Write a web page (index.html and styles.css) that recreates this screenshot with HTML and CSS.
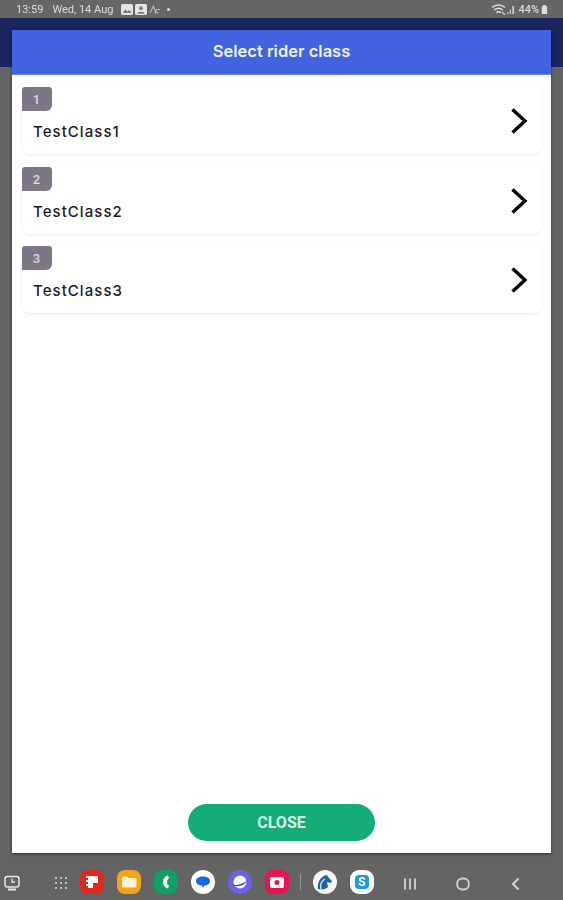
FILE: index.html
```html
<!DOCTYPE html>
<html lang="en">
<head>
    <meta charset="UTF-8">
    <meta name="viewport" content="width=device-width, initial-scale=1.0">
    <title>Select rider class</title>
    <link rel="stylesheet" href="styles.css">
</head>
<body>
    <div class="status-bar">
        <div class="status-left">
            <span class="status-time">13:59</span>
            <span>Wed, 14 Aug</span>
            <svg class="status-icon" viewBox="0 0 11 10"><rect width="11" height="10" rx="1.5" fill="#e4e4e4"/><path d="M1.5 8 4 5l2 2 1.500-1.500L9.500 8z" fill="#666"/></svg>
            <svg class="status-icon" viewBox="0 0 11 10"><rect width="11" height="10" rx="1.500" fill="#e4e4e4"/><circle cx="5.500" cy="3.800" r="1.700" fill="#777"/><path d="M2 9c.5-2.500 6.500-2.500 7 0z" fill="#777"/></svg>
            <svg class="status-icon" viewBox="0 0 11 10"><path d="M1 8l3-6 2 5 1-2h3M5 8h4" fill="none" stroke="#bbb" stroke-width="1"/></svg>
            <span class="status-dot"></span>
        </div>
        <div class="status-right">
            <svg class="status-wifi" viewBox="0 0 14 10"><path d="M1 3c3.500-3 8.500-3 12 0M3 5.500c2.500-2 5.500-2 8 0M5 8c1.200-1 2.800-1 4 0" fill="none" stroke="#ddd" stroke-width="1.400"/><path d="M10 7l3 3" stroke="#ddd"/></svg>
            <svg class="status-signal" viewBox="0 0 9 10"><path d="M0 10h1.500V8H0zM3 10h1.500V5H3zM6 10h2V1H6z" fill="#ccc"/></svg>
            <span class="status-level">44%</span>
            <svg class="status-battery" viewBox="0 0 7 10"><path d="M2 0h3v1.500h1.500V10H.5V1.500H2z" fill="#ddd"/></svg>
        </div>
    </div>
    <div class="app-bar"></div>

    <div class="stage">
        <div class="modal">
            <h1 class="modal-title">Select rider class</h1>
            <div class="class-list">
                <div class="class-card">
                    <span class="class-badge">1</span>
                    <span class="class-name">TestClass1</span>
                    <svg class="chevron" viewBox="0 0 18 28"><path d="M2.500 2.500 15 14 2.500 25.500" fill="none" stroke="#000" stroke-width="3.400"/></svg>
                </div>
                <div class="class-card">
                    <span class="class-badge">2</span>
                    <span class="class-name">TestClass2</span>
                    <svg class="chevron" viewBox="0 0 18 28"><path d="M2.500 2.500 15 14 2.500 25.500" fill="none" stroke="#000" stroke-width="3.400"/></svg>
                </div>
                <div class="class-card">
                    <span class="class-badge">3</span>
                    <span class="class-name">TestClass3</span>
                    <svg class="chevron" viewBox="0 0 18 28"><path d="M2.500 2.500 15 14 2.500 25.500" fill="none" stroke="#000" stroke-width="3.400"/></svg>
                </div>
            </div>
            <div class="modal-footer">
                <button class="close-button">CLOSE</button>
            </div>
        </div>
    </div>

    <div class="dock">
        <svg class="dock-sys" viewBox="0 0 16 16"><rect x="1" y="1.500" width="14" height="10.500" rx="2.500" fill="none" stroke="#e8e8e8" stroke-width="1.500"/><path d="M8 3.500V7h3" fill="none" stroke="#e8e8e8" stroke-width="1.300"/><path d="M4 14.500h8" stroke="#e8e8e8" stroke-width="2"/></svg>
        <svg class="dock-grid" viewBox="0 0 14 14" fill="#ddd">
            <circle cx="2" cy="2" r="1"/><circle cx="7" cy="2" r="1"/><circle cx="12" cy="2" r="1"/>
            <circle cx="2" cy="7" r="1"/><circle cx="7" cy="7" r="1"/><circle cx="12" cy="7" r="1"/>
            <circle cx="2" cy="12" r="1"/><circle cx="7" cy="12" r="1"/><circle cx="12" cy="12" r="1"/>
        </svg>
        <div class="dock-apps">
            <svg class="app-icon" viewBox="0 0 24 24"><rect width="24" height="24" rx="8" fill="#e0281f"/><path d="M6 6h12v7h-5v5H8V16H6v-2h2v-2H6v-2h2V8H6z" fill="#fff"/></svg>
            <svg class="app-icon" viewBox="0 0 24 24"><rect width="24" height="24" rx="8" fill="#f5a31a"/><path d="M5 8c0-1 .5-1.500 1.500-1.500H10L12 8h6c1 0 1.500.5 1.500 1.500V16c0 1-.5 1.500-1.500 1.500H6.500C5.500 17.500 5 17 5 16z" fill="#fff3d0"/></svg>
            <svg class="app-icon" viewBox="0 0 24 24"><rect width="24" height="24" rx="8" fill="#0fa063"/><path d="M14 5.500c-3.500 1-5 3.500-5 6.500s1.500 5.500 5 6.500l1-3c-1.500-.5-2-2-2-3.500s.5-3 2-3.500z" fill="#fff"/></svg>
            <svg class="app-icon" viewBox="0 0 24 24"><circle cx="12" cy="12" r="12" fill="#fff"/><path d="M5 11c0-3 3-4.500 7-4.500s7 1.500 7 4.500-3 4.500-5.500 4.500L12 18l-1-2.500C8 15.500 5 14 5 11z" fill="#1769e0"/></svg>
            <svg class="app-icon" viewBox="0 0 24 24"><circle cx="12" cy="12" r="12" fill="#6a63e3"/><circle cx="12" cy="12" r="6.500" fill="#fff"/><path d="M4 15c5 1 11-1 16-5-3 5-10 8-16 5z" fill="#3a34b0"/></svg>
            <svg class="app-icon" viewBox="0 0 24 24"><rect width="24" height="24" rx="8" fill="#e8134f"/><rect x="5" y="7" width="14" height="11" rx="2" fill="#fff"/><circle cx="12" cy="12.500" r="2.500" fill="#e8134f"/></svg>
        </div>
        <span class="dock-divider"></span>
        <div class="dock-recent">
            <svg class="app-icon" viewBox="0 0 24 24"><circle cx="12" cy="12" r="12" fill="#f4f6f8"/><path d="M5 19c-1-7 3-13 9-14l1 2 4 4-1 2-4-1 1 5c-2 2-5 3-10 2z" fill="#1f5fa8"/><path d="M8 20c-1-5 0-9 4-11" fill="none" stroke="#bcd9f2" stroke-width="1.500"/></svg>
            <svg class="app-icon" viewBox="0 0 24 24"><rect width="24" height="24" rx="9" fill="#fff"/><rect x="5" y="5" width="14" height="14" rx="4" fill="#1d9be0"/><text x="12" y="16" class="skype-letter">S</text></svg>
        </div>
        <div class="nav-buttons">
            <svg class="nav-icon" viewBox="0 0 14 14"><path d="M2 1.500v11M7 1.500v11M12 1.500v11" stroke="#d4d4d4" stroke-width="1.800" fill="none"/></svg>
            <svg class="nav-icon" viewBox="0 0 14 14"><rect x="1.200" y="1.500" width="11.600" height="11" rx="5" fill="none" stroke="#d4d4d4" stroke-width="1.800"/></svg>
            <svg class="nav-icon" viewBox="0 0 14 14"><path d="M9.500 1.500 4 7l5.500 5.500" stroke="#d4d4d4" stroke-width="2" fill="none"/></svg>
        </div>
    </div>
</body>
</html>
```

FILE: styles.css
```css
* {
    box-sizing: border-box;
}
html, body {
    margin: 0;
    height: 100%;
}
body {
    display: flex;
    flex-direction: column;
    height: 900px;
    overflow: hidden;
    position: relative;
    background-color: #636463;
    font-family: Roboto, sans-serif;
}

/* status bar */
.status-bar {
    height: 18px;
    padding: 0 15px 0 16px;
    display: flex;
    justify-content: space-between;
    align-items: center;
    background-color: #666;
    color: #dcdcdc;
    font-size: 11px;
    filter: blur(0.3px);
}
.status-left, .status-right {
    display: flex;
    align-items: center;
}
.status-time {
    margin-right: 9px;
}
.status-icon {
    width: 12px;
    height: 11px;
    margin-left: 2px;
}
.status-left span + .status-icon {
    margin-left: 8px;
}
.status-dot {
    width: 3px;
    height: 3px;
    margin-left: 6px;
    border-radius: 50%;
    background-color: #ddd;
}
.status-wifi {
    width: 15px;
    height: 11px;
}
.status-signal {
    width: 8px;
    height: 9px;
    margin: 0 3px 0 1px;
}
.status-level {
    font-weight: 500;
}
.status-battery {
    width: 7px;
    height: 9px;
    margin-left: 2px;
}
.app-bar {
    height: 49px;
    background-color: #1a2560;
}

/* dialog */
.stage {
    flex: 1;
}
.modal {
    position: absolute;
    left: 12px;
    top: 30px;
    width: 539px;
    height: 823px;
    display: flex;
    flex-direction: column;
    background: white;
    box-shadow: 0 1px 3px rgba(0, 0, 0, 0.5);
}
.modal-title {
    margin: 0;
    height: 45px;
    line-height: 42px;
    text-align: center;
    color: #eef1fd;
    background-color: #4263df;
    border-bottom: 1px solid #6f8ae8;
    font-family: Inter, sans-serif;
    font-size: 16.5px;
    font-weight: 600;
}
.class-list {
    flex: 1;
    padding: 12px 9px 0 10px;
    display: flex;
    flex-direction: column;
    gap: 12.5px;
}
.class-card {
    position: relative;
    height: 67px;
    padding: 35px 0 0 11px;
    background: white;
    border-radius: 8px;
    box-shadow: 0 1px 3px rgba(0, 0, 0, 0.09);
}
.class-badge {
    position: absolute;
    left: 0;
    top: 0;
    width: 30px;
    height: 24px;
    padding-right: 1px;
    text-align: center;
    line-height: 26px;
    color: #dcd8e1;
    background-color: #7d7685;
    border-radius: 3px 3px 6px 0;
    font-family: Roboto, sans-serif;
    font-size: 13px;
    font-weight: 500;
}
.class-name {
    display: block;
    color: #1b1b1f;
    font-family: Inter, sans-serif;
    font-size: 15px;
    font-weight: 500;
    letter-spacing: 1.05px;
}
.chevron {
    position: absolute;
    right: 14px;
    top: 20px;
    width: 18px;
    height: 28px;
}
.modal-footer {
    height: 60px;
    display: flex;
    justify-content: center;
    padding-top: 11px;
}
.close-button {
    width: 187px;
    height: 37px;
    border: none;
    border-radius: 19px;
    color: #d8f3e6;
    background-color: #14ad78;
    font-family: Roboto, sans-serif;
    font-size: 16px;
    font-weight: 700;
}

/* task bar */
.dock {
    height: 47px;
    padding: 17px 0 0 4px;
    display: flex;
    align-items: flex-start;
    filter: blur(0.3px);
}
.dock-sys {
    width: 16px;
    height: 16px;
    margin-top: 5px;
}
.dock-grid {
    width: 14px;
    height: 14px;
    margin: 6px 0 0 34px;
}
.dock-apps, .dock-recent {
    display: flex;
    gap: 13px;
}
.dock-apps {
    margin-left: 12px;
}
.app-icon {
    width: 24px;
    height: 24px;
}
.dock-divider {
    width: 1px;
    height: 16px;
    margin: 4px 0 0 11px;
    background-color: #999;
}
.dock-recent {
    margin-left: 12px;
}
.nav-buttons {
    display: flex;
    gap: 39px;
    margin: 7px 0 0 29px;
}
.nav-icon {
    width: 14px;
    height: 14px;
}
.skype-letter {
    fill: #fff;
    font-family: Roboto, sans-serif;
    font-size: 12px;
    font-weight: 700;
    text-anchor: middle;
}
```
